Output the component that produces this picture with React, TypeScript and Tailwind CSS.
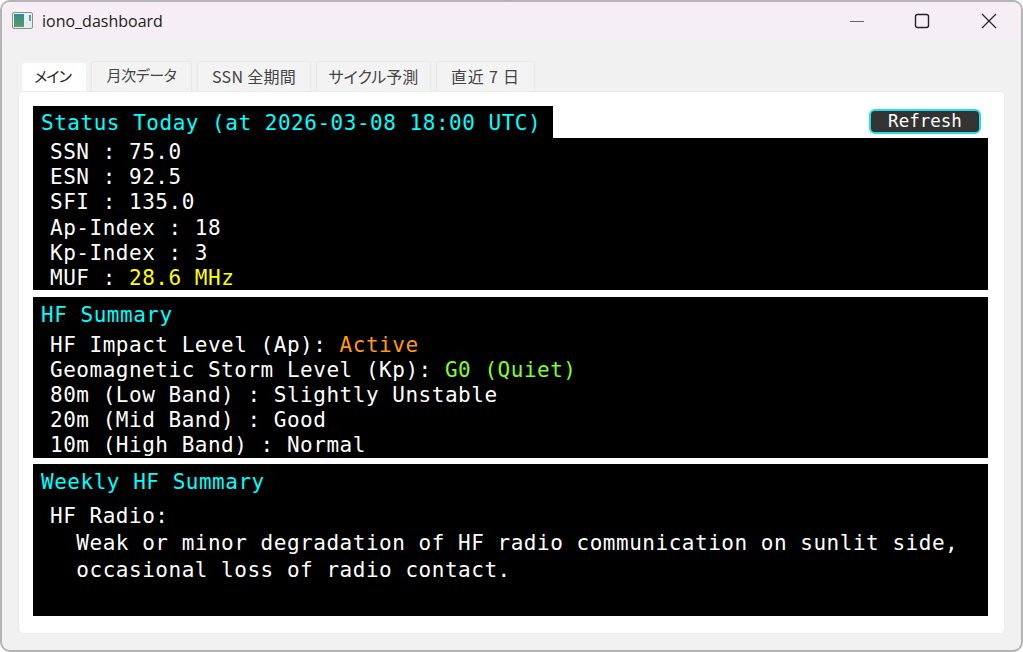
const MONO = "font-['DejaVu_Sans_Mono',monospace] text-[21px] tracking-[0.52px] whitespace-pre";

const TABS = [
  { label: "メイン", width: "w-[64px]", type: "pr-[3px] text-[15px] tracking-[-1px]", active: true },
  { label: "月次データ", width: "w-[101px]", type: "text-[15px] tracking-[-0.4px]" },
  { label: "SSN 全期間", width: "w-[114px]", type: "text-[16px] tracking-[0.3px]" },
  { label: "サイクル予測", width: "w-[115px]", type: "text-[16px]" },
  { label: "直近 7 日", width: "w-[99px]", type: "text-[16px] tracking-[0.8px]" },
];

const STATUS = ["SSN : 75.0", "ESN : 92.5", "SFI : 135.0", "Ap-Index : 18", "Kp-Index : 3"];

function AppIcon() {
  return (
    <svg width="22" height="18" viewBox="0 0 22 18" className="shrink-0">
      <defs>
        <linearGradient id="pane" x1="0" y1="0" x2="0" y2="1">
          <stop offset="0" stopColor="#2f8f8a" />
          <stop offset="1" stopColor="#5f9a6c" />
        </linearGradient>
      </defs>
      <rect x="0.5" y="0.5" width="20" height="16" rx="1.5" fill="#e8eef0" stroke="#8a8f94" />
      <rect x="2" y="2" width="10" height="13" fill="url(#pane)" />
      <rect x="17" y="3" width="2" height="6" fill="#5aa0a0" />
    </svg>
  );
}

function TitleBar() {
  return (
    <div className="flex h-[43px] items-center bg-gradient-to-b from-[#f7edf6] to-[#f3f0f3] pb-[6px] pl-[10px]">
      <AppIcon />
      <span className="ml-[8px] font-['Open_Sans',sans-serif] text-[16px] text-[#222]">iono_dashboard</span>
      <div className="ml-auto flex items-center text-[#222]">
        <svg width="16" height="16" viewBox="0 0 16 16" className="mr-[49px]">
          <path d="M1 8.5h14" stroke="#666" strokeWidth="1.2" />
        </svg>
        <svg width="16" height="16" viewBox="0 0 16 16" className="mr-[51px]">
          <rect x="1.5" y="1.5" width="13" height="13" rx="2" fill="none" stroke="#222" strokeWidth="1.4" />
        </svg>
        <svg width="16" height="16" viewBox="0 0 16 16" className="mr-[24px]">
          <path d="M1 1l14 14M15 1L1 15" stroke="#222" strokeWidth="1.2" />
        </svg>
      </div>
    </div>
  );
}

function Tabs() {
  return (
    <div className="flex h-[30px] items-end gap-[5px] pl-[20px]">
      {TABS.map((t) => (
        <div
          key={t.label}
          className={`${t.width} ${t.type} flex items-center justify-center rounded-t-[3px] pb-[2px] font-['Noto_Sans_CJK_JP',sans-serif] [font-feature-settings:'palt'] ${
            t.active
              ? "h-[28px] bg-white text-[#222]"
              : "h-[30px] border border-b-0 border-[#e8e8e8] bg-[#f3f3f3] text-[#444]"
          }`}
        >
          {t.label}
        </div>
      ))}
    </div>
  );
}

export default function App() {
  return (
    <div className="h-[652px] w-[1023px] overflow-hidden rounded-[10px] border-2 border-[#b4b4b4] bg-[#f1f1f1]">
      <TitleBar />
      <div className="mt-[16px]">
        <Tabs />
      </div>
      <div className="mx-[16px] rounded-[5px] border border-[#ebebeb] bg-white pt-[14px] pr-[16px] pb-[17px] pl-[14px]">
        <div className={`${MONO} flex items-start justify-between`}>
          <div className="flex h-[32px] w-[520px] items-center bg-black pt-[4px] pl-[8px] text-[#00ffff]">
            Status Today (at 2026-03-08 18:00 UTC)
          </div>
          <button className="mt-[3px] mr-[7px] flex h-[25px] w-[112px] items-center justify-center rounded-[6px] border-2 border-[#22dfe6] bg-[#333] font-['DejaVu_Sans_Mono',monospace] text-[17.5px] tracking-normal text-white">
            Refresh
          </button>
        </div>
        <div className={`${MONO} h-[152px] bg-black pt-[2px] pl-[17px] leading-[25.2px] text-white`}>
          {STATUS.map((s) => (
            <div key={s}>{s}</div>
          ))}
          <div>
            MUF : <span className="text-[#ffff00]">28.6 MHz</span>
          </div>
        </div>
        <div className={`${MONO} mt-[7px] h-[161px] bg-black pl-[8px] text-white`}>
          <div className="flex h-[34px] items-center pt-[4px] text-[#00ffff]">HF Summary</div>
          <div className="pt-[2px] pl-[9px] leading-[25px]">
            <div>
              HF Impact Level (Ap): <span className="text-[#ff9a0d]">Active</span>
            </div>
            <div>
              Geomagnetic Storm Level (Kp): <span className="text-[#7fff2a]">G0 (Quiet)</span>
            </div>
            <div>80m (Low Band) : Slightly Unstable</div>
            <div>20m (Mid Band) : Good</div>
            <div>10m (High Band) : Normal</div>
          </div>
        </div>
        <div className={`${MONO} mt-[6px] h-[152px] bg-black pl-[8px] text-white`}>
          <div className="flex h-[34px] items-center pt-[4px] text-[#00ffff]">Weekly HF Summary</div>
          <div className="pt-[5px] pl-[9px] leading-[27px]">
            <div>HF Radio:</div>
            <div>{"  Weak or minor degradation of HF radio communication on sunlit side,"}</div>
            <div>{"  occasional loss of radio contact."}</div>
          </div>
        </div>
      </div>
    </div>
  );
}
